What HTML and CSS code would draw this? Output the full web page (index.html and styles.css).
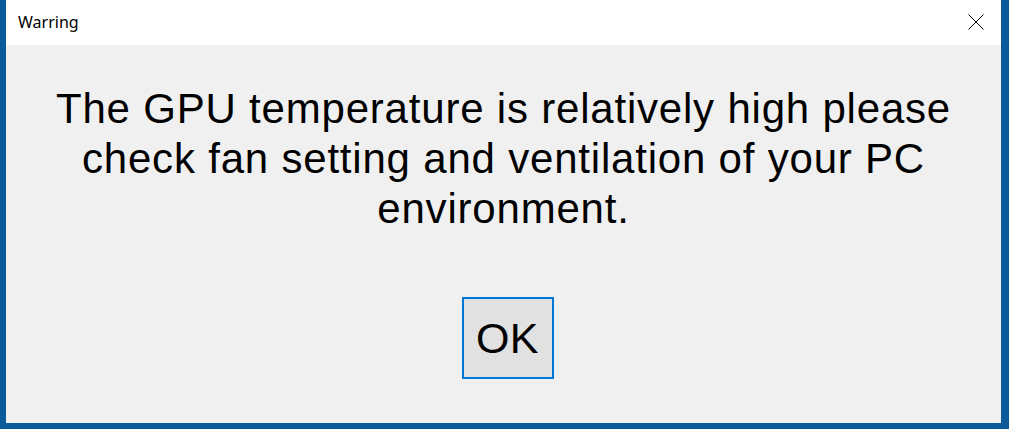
FILE: index.html
```html
<!DOCTYPE html>
<html>
<head>
<meta charset="utf-8">
<link rel="stylesheet" href="styles.css">
</head>
<body>
<div class="window">
  <div class="titlebar">
    <span class="title">Warring</span>
    <svg class="close" width="16" height="16" viewBox="0 0 16 16"><path d="M0.5 0.5 L15.5 15.5 M15.5 0.5 L0.5 15.5" stroke="#000" stroke-width="1" fill="none"/></svg>
  </div>
  <div class="content">
    <p class="message">The GPU temperature is relatively high please check fan setting and ventilation of your PC environment.</p>
    <button class="ok">OK</button>
  </div>
</div>
</body>
</html>
```
FILE: styles.css
```css
html, body {
  margin: 0;
  padding: 0;
}
body {
  width: 1009px;
  height: 429px;
  background: #0b5a9c;
  overflow: hidden;
}
.window {
  margin-left: 6px;
  width: 995px;
  height: 423px;
  display: flex;
  flex-direction: column;
  background: #f0f0f0;
}
.titlebar {
  height: 45px;
  background: #ffffff;
  display: flex;
  align-items: center;
  justify-content: space-between;
  padding: 0 17px 0 12px;
  flex-shrink: 0;
}
.title {
  font-family: "Noto Sans", "DejaVu Sans", sans-serif;
  font-size: 16px;
  color: #000;
  margin-top: -1px;
}
.close {
  display: block;
  margin-top: -1px;
}
.content {
  flex: 1;
  display: flex;
  flex-direction: column;
  align-items: center;
  padding-top: 39px;
}
.message {
  margin: 0;
  width: 940px;
  text-align: center;
  font-family: "Liberation Sans", Arial, sans-serif;
  font-size: 42px;
  letter-spacing: 0.8px;
  line-height: 50px;
  color: #000;
}
.ok {
  margin-top: 63px;
  margin-left: 8px;
  width: 92px;
  height: 82px;
  box-sizing: border-box;
  border: 2px solid #0078d7;
  background: #e1e1e1;
  font-family: "Liberation Sans", Arial, sans-serif;
  font-size: 43px;
  letter-spacing: 0.5px;
  color: #000;
  padding: 0;
}
```
